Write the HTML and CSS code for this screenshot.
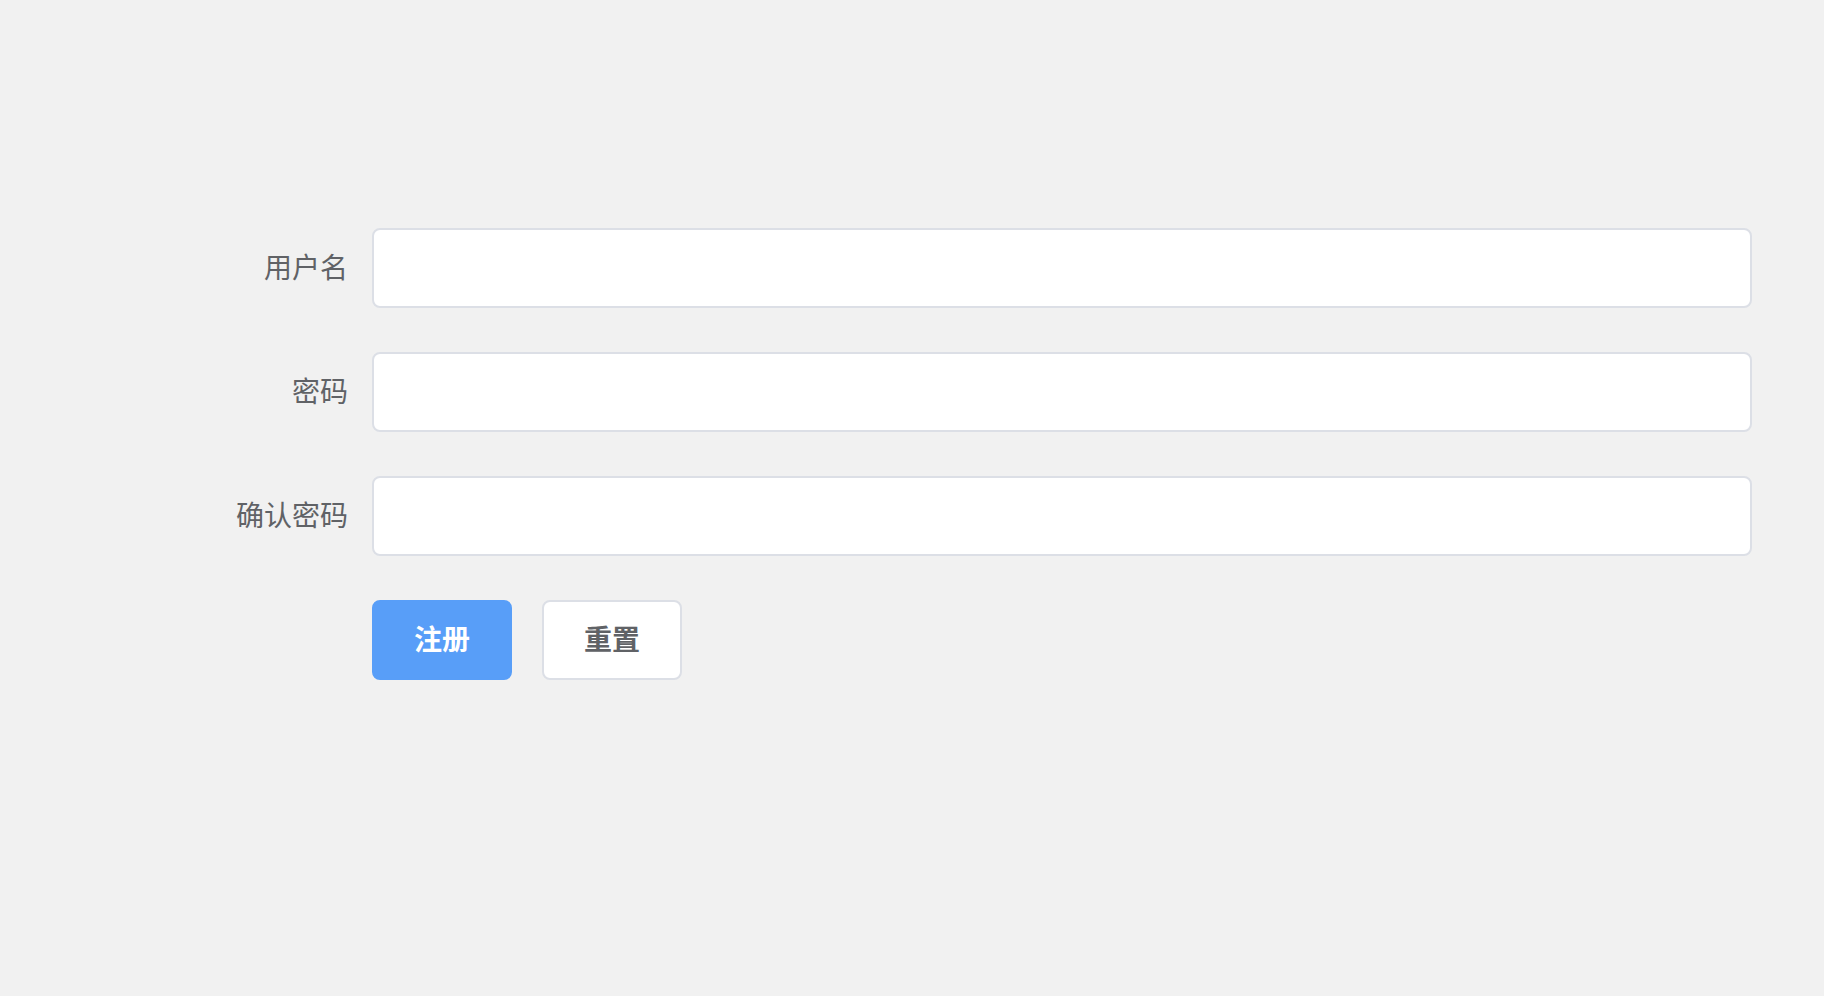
FILE: index.html
```html
<!DOCTYPE html>
<html lang="zh-CN">
<head>
<meta charset="utf-8">
<title>注册</title>
<link rel="stylesheet" href="styles.css">
</head>
<body>
<div class="page">
  <form class="form">
    <div class="form-item">
      <label class="label">用户名</label>
      <div class="control"><input class="input" type="text"></div>
    </div>
    <div class="form-item">
      <label class="label">密码</label>
      <div class="control"><input class="input" type="password"></div>
    </div>
    <div class="form-item">
      <label class="label">确认密码</label>
      <div class="control"><input class="input" type="password"></div>
    </div>
    <div class="form-item">
      <div class="label"></div>
      <div class="control buttons">
        <button class="btn btn-primary" type="button">注册</button>
        <button class="btn btn-default" type="button">重置</button>
      </div>
    </div>
  </form>
</div>
</body>
</html>
```

FILE: styles.css
```css
html, body {
  margin: 0;
  padding: 0;
  background: #f1f1f1;
  font-family: "Noto Sans CJK SC", "Noto Sans", sans-serif;
}
.page {
  padding-top: 228px;
  height: 996px;
  box-sizing: border-box;
}
.form {
  margin: 0 72px 0 172px;
}
.form-item {
  display: flex;
  margin-bottom: 44px;
}
.label {
  width: 200px;
  flex: none;
  box-sizing: border-box;
  padding-right: 24px;
  padding-bottom: 4px;
  text-align: right;
  font-size: 28px;
  line-height: 76px;
  color: #606266;
}
.control {
  flex: 1;
}
.input {
  display: block;
  width: 100%;
  height: 80px;
  box-sizing: border-box;
  border: 2px solid #dcdfe6;
  border-radius: 8px;
  background: #fff;
  outline: none;
  padding: 0 30px;
  font-size: 28px;
  font-family: inherit;
}
.buttons {
  display: flex;
  gap: 30px;
}
.btn {
  width: 140px;
  height: 80px;
  box-sizing: border-box;
  border-radius: 8px;
  font-size: 28px;
  font-weight: 700;
  font-family: inherit;
  padding: 0 0 4px;
  cursor: pointer;
}
.btn-primary {
  background: #589ef8;
  border: 2px solid #589ef8;
  color: #fff;
}
.btn-default {
  background: #fff;
  border: 2px solid #dcdfe6;
  color: #606266;
}
```
